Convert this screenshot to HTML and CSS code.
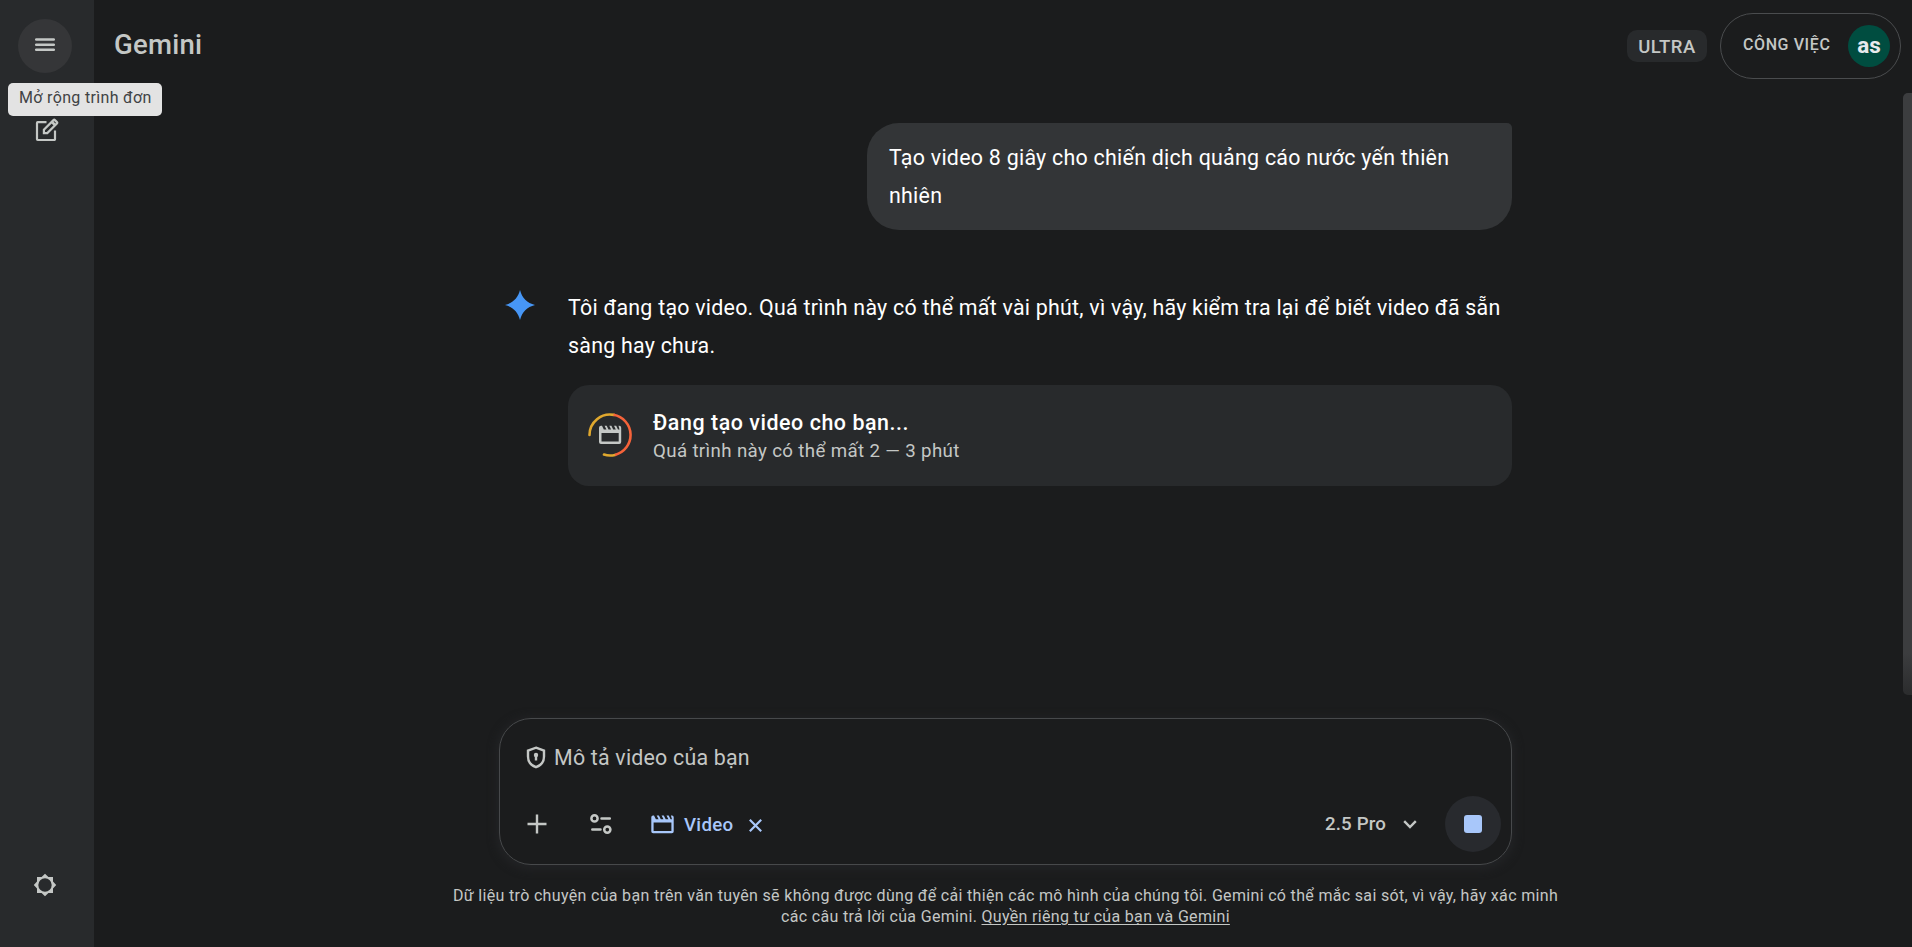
FILE: index.html
```
<!DOCTYPE html>
<html lang="vi">
<head>
<meta charset="utf-8">
<title>Gemini</title>
<link rel="stylesheet" href="styles.css">
</head>
<body>
<div class="app">
  <aside class="sidebar">
    <button class="menu-btn" aria-label="Menu">
      <svg width="20" height="14" viewBox="0 0 20 14"><path d="M1.2 1.6H18.8M1.2 6.700H18.8M1.2 11.800H18.8" stroke="#c4c7c5" stroke-width="2.500" stroke-linecap="round"/></svg>
    </button>
    <svg class="edit-icon" width="24" height="24" viewBox="0 0 24 24" fill="none" stroke="#c4c7c5" stroke-width="2.200"><path d="M11.500 4.200H2.700a.7.7 0 0 0-.7.7V21.300a.7.7 0 0 0 .7.7H19.300a.7.7 0 0 0 .7-.7V12.500"/><path d="M8.900 15.100V11.700L18.500 2.100a1 1 0 0 1 1.400 0l2 2a1 1 0 0 1 0 1.400L12.300 15.100Z"/><path d="M17 4 20 7" stroke-width="2.600"/></svg>
    <svg class="gear-icon" width="24" height="24" viewBox="0 0 24 24"><path fill="#c4c7c5" fill-rule="evenodd" d="M12 .8 15.400 4H20V8.600L23.200 12 20 15.400V20H15.400L12 23.200 8.600 20H4V15.400L.8 12 4 8.600V4H8.600ZM12 5.300a6.700 6.700 0 1 0 0 13.400 6.700 6.700 0 0 0 0-13.400Z"/></svg>
    <div class="tooltip">Mở rộng trình đơn</div>
  </aside>
  <main class="main">
    <header class="topbar">
      <div class="brand">Gemini</div>
      <div class="account">
        <div class="tier">ULTRA</div>
        <div class="work"><span class="work-label">CÔNG VIỆC</span><div class="avatar">as</div></div>
      </div>
    </header>
    <section class="chat">
      <div class="prompt">Tạo video 8 giây cho chiến dịch quảng cáo nước yến thiên<br>nhiên</div>
      <div class="reply">
        <svg class="spark" width="30" height="30" viewBox="0 0 30 30"><path d="M15 0C17 8 22 13 30 15 22 17 17 22 15 30 13 22 8 17 0 15 8 13 13 8 15 0Z" fill="#4796f5"/></svg>
        <div class="reply-body">
          <p class="reply-text">Tôi đang tạo video. Quá trình này có thể mất vài phút, vì vậy, hãy kiểm tra lại để biết video đã sẵn<br>sàng hay chưa.</p>
          <div class="card">
            <svg width="44" height="44" viewBox="0 0 44 44" fill="none"><path d="M1.500 22A20.500 20.500 0 0 1 26 1.900" stroke="#e0a82e" stroke-width="2.600" stroke-linecap="round"/><path d="M16 41.600A20.500 20.500 0 0 0 27 41.900" stroke="#e0a82e" stroke-width="2.600" stroke-linecap="round"/><path d="M25.500 1.800A20.500 20.500 0 0 1 27 41.900" stroke="#f6633a" stroke-width="2.600"/><path fill="#c4c7c5" fill-rule="evenodd" d="M13 12.800H14L15.800 16.500H18.400L16.600 12.800H18.700L20.500 16.500H23.100L21.300 12.800H23.400L25.200 16.500H27.800L26 12.800H28.200L30 16.500H31.500L30.500 12.800H31.300Q33.200 12.800 33.200 14.800V28.900Q33.200 30.900 31.200 30.900H13Q11 30.900 11 28.900V14.800Q11 12.800 13 12.800ZM13.500 20V28.400H30.700V20Z"/></svg>
            <div class="card-text"><div class="card-title">Đang tạo video cho bạn...</div><div class="card-sub">Quá trình này có thể mất 2 — 3 phút</div></div>
          </div>
        </div>
      </div>
    </section>
    <section class="composer">
      <div class="field">
        <svg width="20" height="23" viewBox="0 0 20 23" fill="none"><path d="M10 1.700 18 4.500V10.500C18 15.500 14.800 19.500 10 21.200 5.200 19.500 2 15.500 2 10.500V4.500Z" stroke="#c4c7c5" stroke-width="2.400"/><circle cx="10" cy="9" r="2.200" fill="#c4c7c5"/><path d="M10 9V14.500" stroke="#c4c7c5" stroke-width="2.400"/></svg>
        <span>Mô tả video của bạn</span>
      </div>
      <div class="tools">
        <svg class="plus" width="20" height="20" viewBox="0 0 20 20"><path d="M10 .5V19.500M.5 10H19.500" stroke="#c4c7c5" stroke-width="2.400"/></svg>
        <svg class="tune" width="22" height="20" viewBox="0 0 22 20" fill="none" stroke="#c4c7c5" stroke-width="2.500"><circle cx="4.500" cy="4.400" r="3.100"/><path d="M11.500 4.400H19.800M2.300 15.600H10.500" stroke-linecap="round"/><circle cx="17.300" cy="15.600" r="3.100"/></svg>
        <svg class="clap" width="23" height="19" viewBox="0 0 23 19"><path fill="#a8c7fa" fill-rule="evenodd" d="M2 .5H3L4.900 4.300H7.600L5.700.5H7.900L9.800 4.300H12.500L10.600.5H12.800L14.700 4.300H17.400L15.500.5H17.700L19.600 4.300H21L19.900.5H21Q22.700.5 22.700 2.300V16.500Q22.700 18.300 20.900 18.300H2.100Q.3 18.300.3 16.500V2.300Q.3.5 2 .5ZM2.600 7.400V15.900H20.400V7.400Z"/></svg>
        <span class="tool-name">Video</span>
        <svg class="close" width="13" height="13" viewBox="0 0 13 13"><path d="M.8.8 12.200 12.200M12.200.8.8 12.200" stroke="#a8c7fa" stroke-width="2.200"/></svg>
        <span class="model">2.5 Pro</span>
        <svg class="chev" width="14" height="9" viewBox="0 0 14 9" fill="none"><path d="M1.200 1.200 7 7 12.800 1.200" stroke="#c4c7c5" stroke-width="2.400"/></svg>
        <button class="stop" aria-label="Stop"><i></i></button>
      </div>
    </section>
    <footer class="note">Dữ liệu trò chuyện của bạn trên văn tuyên sẽ không được dùng để cải thiện các mô hình của chúng tôi. Gemini có thể mắc sai sót, vì vậy, hãy xác minh<br>các câu trả lời của Gemini. <a>Quyền riêng tư của bạn và Gemini</a></footer>
    <div class="scroll-thumb"></div>
  </main>
</div>
</body>
</html>
```
FILE: styles.css
```
* { box-sizing: border-box; }
body {
  margin: 0;
  background: #1b1c1d;
  color: #fff;
  font-family: Roboto, "Noto Sans", sans-serif;
  overflow: hidden;
}
svg { display: block; flex: none; }
button { border: 0; padding: 0; }
.app { display: flex; width: 1912px; height: 947px; }

.sidebar {
  position: relative;
  display: flex;
  flex-direction: column;
  width: 94px;
  padding: 19px 0 50px 18px;
  background: #282a2c;
}
.menu-btn {
  display: grid;
  place-items: center;
  width: 54px;
  height: 54px;
  padding-bottom: 2px;
  border-radius: 50%;
  background: #353638;
}
.edit-icon { margin: 45px 0 0 17px; }
.gear-icon { margin: auto 0 0 15px; }
.tooltip {
  position: absolute;
  z-index: 2;
  left: 8px;
  top: 83px;
  width: 154px;
  height: 33px;
  padding-left: 11px;
  border-radius: 5px;
  background: #e3e3e3;
  color: #404244;
  font-size: 16px;
  letter-spacing: .33px;
  line-height: 30px;
  white-space: nowrap;
}

.main {
  position: relative;
  display: flex;
  flex: 1;
  flex-direction: column;
}
.topbar {
  display: flex;
  justify-content: space-between;
  height: 93px;
  padding: 13px 11px 0 20px;
}
.brand { color: #c4c7c5; font-size: 27.500px; font-weight: 500; letter-spacing: .25px; line-height: 64px; }
.account { display: flex; gap: 13px; color: #c4c7c5; }
.tier {
  width: 80px;
  height: 32px;
  margin-top: 17px;
  border-radius: 10px;
  background: #282a2c;
  font-size: 18.500px;
  font-weight: 500;
  letter-spacing: .5px;
  line-height: 34px;
  text-align: center;
}
.work {
  display: flex;
  align-items: center;
  justify-content: space-between;
  width: 181px;
  height: 66px;
  padding: 0 10px 0 22px;
  border: 1px solid #4a4c4e;
  border-radius: 33px;
  font-size: 16px;
  font-weight: 500;
  white-space: nowrap;
}
.work-label { margin-top: -3px; letter-spacing: .6px; }
.avatar {
  width: 42px;
  height: 42px;
  border-radius: 50%;
  background: #004d40;
  color: #e8eaed;
  font-size: 22.500px;
  font-weight: 700;
  line-height: 41px;
  text-align: center;
}

.chat {
  display: flex;
  flex-direction: column;
  width: 1012px;
  height: 625px;
  margin-left: 406px;
  padding-top: 30px;
  font-size: 21.400px;
  letter-spacing: .26px;
  line-height: 37.500px;
  white-space: nowrap;
}
.prompt {
  align-self: flex-end;
  width: 645px;
  height: 107px;
  padding: 16px 22px;
  border-radius: 32px 5px 32px 32px;
  background: #333537;
}
.reply { display: flex; gap: 33px; margin-top: 60px; padding-left: 5px; }
.reply-body { flex: 1; }
.reply-text { margin: -1px 0 0; letter-spacing: .24px; }
.card {
  display: flex;
  gap: 21px;
  width: 944px;
  height: 101px;
  margin-top: 21px;
  padding: 28px 20px;
  border-radius: 21px;
  background: #282a2c;
}
.card-text { margin-top: -5px; }
.card-title { font-size: 21.400px; font-weight: 500; letter-spacing: .56px; line-height: 29px; }
.card-sub { color: #c4c7c5; font-size: 18.700px; letter-spacing: .36px; line-height: 28px; }

.composer {
  width: 1013px;
  height: 147px;
  margin-left: 405px;
  padding: 26px 10px 0 26px;
  border: 1px solid #47494b;
  border-radius: 32px;
  box-shadow: 0 2px 8px 3px #222325;
}
.field {
  display: flex;
  align-items: center;
  gap: 8px;
  height: 24px;
  color: #c4c7c5;
  font-size: 21.400px;
  letter-spacing: .2px;
}
.tools { display: flex; align-items: center; height: 56px; margin-top: 27px; }
.plus { margin-left: 1px; }
.tune { margin-left: 43px; }
.clap { margin-left: 39px; }
.tool-name { margin: 2px 0 0 10px; color: #a8c7fa; font-size: 18.700px; font-weight: 500; letter-spacing: .3px; }
.close { margin: 2px 0 0 16px; }
.model { margin-left: auto; color: #c4c7c5; font-size: 18.700px; font-weight: 500; letter-spacing: .15px; }
.chev { margin-left: 17px; }
.stop {
  display: grid;
  place-items: center;
  width: 56px;
  height: 56px;
  margin-left: 28px;
  border-radius: 50%;
  background: #282a2e;
}
.stop i { width: 18px; height: 18px; border-radius: 3px; background: #a8c7fa; }

.note {
  width: 1107px;
  margin: 20px 0 0 358px;
  color: #c4c7c5;
  font-size: 16px;
  letter-spacing: .325px;
  line-height: 21.400px;
  text-align: center;
  white-space: nowrap;
}
.note a { text-decoration: underline; text-underline-offset: 2px; }
.scroll-thumb {
  position: absolute;
  right: 0;
  top: 93px;
  width: 9px;
  height: 602px;
  border-radius: 5px 0 0 5px;
  background: linear-gradient(#3c3d3f 93%, #2b2c2d);
}
```
